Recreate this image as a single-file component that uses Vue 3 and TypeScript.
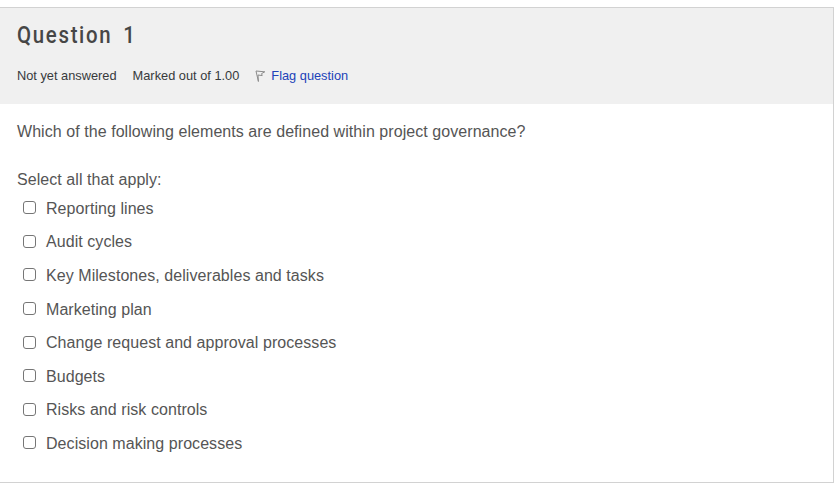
<script setup lang="ts">
const options: string[] = [
  'Reporting lines',
  'Audit cycles',
  'Key Milestones, deliverables and tasks',
  'Marketing plan',
  'Change request and approval processes',
  'Budgets',
  'Risks and risk controls',
  'Decision making processes',
]
</script>

<template>
  <div class="page">
    <section class="question">
      <header class="info">
        <h3 class="title">Question 1</h3>
        <div class="meta">
          <span>Not yet answered</span>
          <span>Marked out of 1.00</span>
          <a class="flag" href="#" @click.prevent>
            <svg class="flag-icon" width="11" height="13" viewBox="0 0 11 13" fill="none">
              <path d="M1 1 L9.8 1.8 L6.6 3.6 L7.2 5.6 L3 5 L3.4 11.5 Z" stroke="#8c8c8c" stroke-width="1" stroke-linejoin="round" />
            </svg>
            <span class="flag-text">Flag question</span>
          </a>
        </div>
      </header>
      <div class="content">
        <p class="prompt">Which of the following elements are defined within project governance?</p>
        <p class="hint">Select all that apply:</p>
        <div class="answers">
          <label v-for="option in options" :key="option" class="answer">
            <input type="checkbox" class="box" />
            <span>{{ option }}</span>
          </label>
        </div>
      </div>
    </section>
  </div>
</template>

<style>
html,
body {
  background: #fff;
  overflow: hidden;
}
</style>

<style scoped>
.page {
  width: 835px;
  height: 486px;
  padding-top: 7px;
  box-sizing: border-box;
  font-family: "Liberation Sans", Arial, sans-serif;
}

.question {
  width: 834px;
  height: 476px;
  box-sizing: border-box;
  border-top: 1px solid #d2d2d2;
  border-right: 1px solid #d2d2d2;
  border-bottom: 1px solid #d2d2d2;
}

.info {
  height: 96px;
  box-sizing: border-box;
  padding: 14px 17px 0;
  background: #f0f0f0;
}

.title {
  margin: 0;
  font-family: Roboto, sans-serif;
  font-size: 24px;
  line-height: 27px;
  font-weight: 500;
  letter-spacing: 2px;
  word-spacing: 5px;
  color: #464646;
  transform: scaleX(0.85);
  transform-origin: left center;
}

.meta {
  display: flex;
  align-items: center;
  gap: 16px;
  margin-top: 19px;
  font-size: 12.8px;
  line-height: 16px;
  color: #373a3c;
}

.flag {
  display: flex;
  align-items: center;
  gap: 5px;
  text-decoration: none;
}

.flag-text {
  color: #2142b8;
}

.content {
  padding: 18px 17px 0;
  font-size: 16px;
  line-height: 20px;
  letter-spacing: 0.06px;
  color: #555;
}

.prompt {
  margin: 0;
}

.hint {
  margin: 28px 0 0;
}

.answers {
  display: flex;
  flex-direction: column;
  margin-top: 2px;
}

.answer {
  display: flex;
  align-items: center;
  gap: 10px;
  height: 33.6px;
  padding-left: 6px;
}

.box {
  appearance: none;
  width: 13px;
  height: 13px;
  margin: -2px 0 0;
  background: #fff;
  border: 1px solid #767676;
  border-radius: 3px;
  box-sizing: border-box;
}
</style>
